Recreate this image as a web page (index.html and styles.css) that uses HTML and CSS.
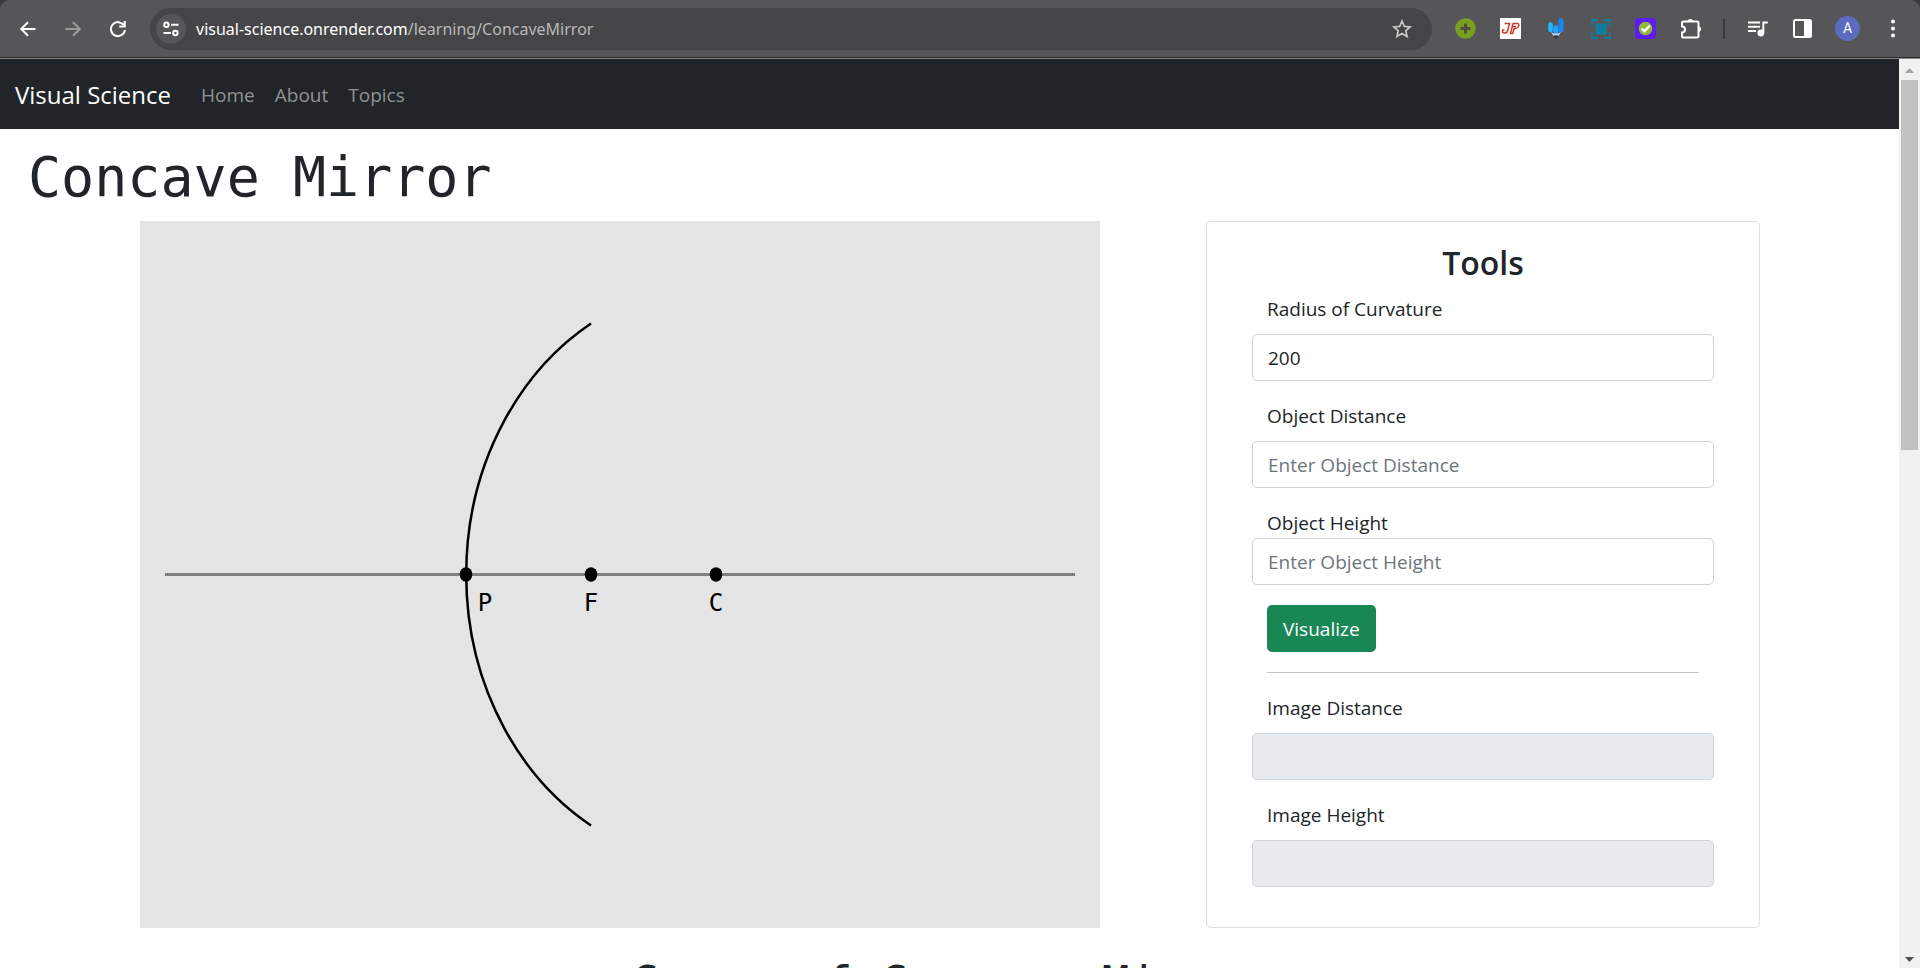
FILE: index.html
```html
<!DOCTYPE html>
<html lang="en">
<head>
<meta charset="utf-8">
<title>Concave Mirror</title>
<link rel="stylesheet" href="styles.css">
</head>
<body>
<header class="toolbar">
  <div class="toolbar-surface">
    <button class="tool" aria-label="Back"><svg width="16" height="16" viewBox="0 0 16 16"><path d="M15.5 8H1.5M8 1.2L1.2 8L8 14.8" class="ln white"/></svg></button>
    <button class="tool" aria-label="Forward"><svg width="16" height="16" viewBox="0 0 16 16"><path d="M.5 8H14.5M8 1.2L14.8 8L8 14.8" class="ln dim"/></svg></button>
    <button class="tool" aria-label="Reload"><svg width="18" height="18" viewBox="0 0 18 18"><path d="M15 5.6A7 7 0 1 0 15.9 10" class="ln white"/><path d="M16.8 1V7.6H10.2V5.6H14.8V1Z" fill="#fff"/></svg></button>
    <div class="omnibox">
      <button class="site-info" aria-label="Site information"><svg width="16" height="16" viewBox="0 0 16 16"><g class="ln white"><circle cx="3.4" cy="3.8" r="2.2"/><path d="M8 3.8H15.5M.5 12H8"/><circle cx="12.4" cy="12" r="2.2"/></g></svg></button>
      <span class="url">visual-science.onrender.com<span class="url-path">/learning/ConcaveMirror</span></span>
      <button class="star" aria-label="Bookmark"><svg width="20" height="20" viewBox="0 0 20 20"><path d="M10 2L12.3 7.4L18.2 7.9L13.7 11.8L15.1 17.5L10 14.5L4.9 17.5L6.3 11.8L1.8 7.9L7.7 7.4Z" fill="none" stroke="#c7c7c7" stroke-width="1.7"/></svg></button>
    </div>
    <div class="extensions">
      <button class="tool" aria-label="Add"><svg width="21" height="21" viewBox="0 0 21 21"><circle cx="10.5" cy="10.5" r="10.3" fill="#789f1d"/><path d="M10.5 5.5V15.5M5.5 10.5H15.5" stroke="#4c5042" stroke-width="3"/></svg></button>
      <button class="tool" aria-label="JF"><svg width="21" height="21" viewBox="0 0 21 21"><path d="M0 0H21V21H0Z" fill="#fff"/><path d="M4.5 5.5H9.5L7.5 13Q7 15 4.500 15Q2 15 2.500 12H4.500M10.500 15.500L13 5.500H18Q19.500 6.500 18.500 8.500Q17.500 10.500 15 10.500H14L12.800 15.500ZM13 8.500H16" fill="none" stroke="#cf3a30" stroke-width="1.5" stroke-linejoin="round"/></svg></button>
      <button class="tool" aria-label="Pencil"><svg width="16" height="21" viewBox="0 0 16 21"><path d="M2.500 6.500V12" stroke="#20b7fa" stroke-width="4.500" stroke-linecap="round"/><path d="M7.800 10V13" stroke="#1ca3f8" stroke-width="5.500" stroke-linecap="round"/><path d="M13 2.500V12" stroke="#1c82f5" stroke-width="5" stroke-linecap="round"/><path d="M3 14Q8 17 13 14L10.500 18H5.500Z" fill="#b5d9f2"/><path d="M5.500 17.500H10.500L8 21Z" fill="#2c2f36"/></svg></button>
      <button class="tool" aria-label="Capture"><svg width="20" height="20" viewBox="0 0 20 20"><path d="M4.500 4.500H15.500V15.500H4.500Z" fill="#127ba3"/><path d="M1 7V1H7M13 1H19V7M19 13V19H13M7 19H1V13" fill="none" stroke="#127ba3" stroke-width="1.800"/></svg></button>
      <button class="tool" aria-label="Check"><svg width="21" height="21" viewBox="0 0 21 21"><rect width="21" height="21" rx="3" fill="#5d1cf0"/><circle cx="10.500" cy="10.500" r="6.800" fill="#92b936"/><path d="M6.800 10.500L9.500 13.300L14.800 7.500" fill="none" stroke="#fff" stroke-width="2.300"/></svg></button>
      <button class="tool" aria-label="Extensions"><svg width="22" height="22" viewBox="0 0 22 22"><path d="M3.500 3.500H17Q18.500 3.500 18.500 5V18Q18.500 19.500 17 19.500H3.500Q2 19.500 2 18V14.500A3 3 0 0 0 2 8.500V5Q2 3.500 3.500 3.500Z" class="ln white"/><path d="M7.800 3.500A2.600 2.600 0 0 1 13 3.500ZM18.500 8.500A2.600 2.600 0 0 1 18.500 13.700Z" fill="#fff"/></svg></button>
    </div>
    <div class="divider"></div>
    <button class="tool" aria-label="Media"><svg width="20" height="16" viewBox="0 0 20 16"><path d="M0 1.500H12M0 5.700H12M0 9.900H8M15.300 12V1.500H19.800" class="ln white"/><circle cx="12.900" cy="12" r="3.400" fill="#fff"/></svg></button>
    <button class="tool" aria-label="Side panel"><svg width="19" height="19" viewBox="0 0 19 19"><rect x="1" y="1" width="17" height="17" rx="1.500" class="ln white"/><path d="M11 1H18V18H11Z" fill="#fff"/></svg></button>
    <button class="tool" aria-label="Profile"><span class="avatar">A</span></button>
    <button class="tool" aria-label="Menu"><svg width="4" height="19" viewBox="0 0 4 19"><g fill="#fff"><circle cx="2" cy="2.500" r="2"/><circle cx="2" cy="9.500" r="2"/><circle cx="2" cy="16.500" r="2"/></g></svg></button>
  </div>
</header>
<div class="viewport">
  <div class="page">
    <nav class="navbar">
      <a class="brand" href="#">Visual Science</a>
      <a class="nav-link" href="#">Home</a>
      <a class="nav-link" href="#">About</a>
      <a class="nav-link" href="#">Topics</a>
    </nav>
    <main>
      <h1 class="title">Concave Mirror</h1>
      <div class="lab">
        <div class="stage">
          <svg class="diagram" viewBox="0 0 960 707" role="img" aria-label="Concave mirror ray diagram">
            <path d="M25 353.500H935" stroke="#808080" stroke-width="3"/>
            <path d="M451 102.500A250 290 0 0 0 451 604.500" fill="none" stroke="#000" stroke-width="2.500"/>
            <ellipse cx="326" cy="353.500" rx="6.300" ry="7.300"/>
            <ellipse cx="451" cy="353.500" rx="6.300" ry="7.300"/>
            <ellipse cx="576" cy="353.500" rx="6.300" ry="7.300"/>
            <text class="point" x="345" y="390">P</text>
            <text class="point" x="451" y="390">F</text>
            <text class="point" x="576" y="390">C</text>
          </svg>
        </div>
        <form class="card">
          <h2 class="card-title">Tools</h2>
          <div class="field"><label for="radius">Radius of Curvature</label><input id="radius" type="text" value="200"></div>
          <div class="field"><label for="distance">Object Distance</label><input id="distance" type="text" placeholder="Enter Object Distance"></div>
          <div class="field tight"><label for="height">Object Height</label><input id="height" type="text" placeholder="Enter Object Height"></div>
          <button class="visualize" type="button">Visualize</button>
          <hr class="rule">
          <div class="field"><label for="image-distance">Image Distance</label><input id="image-distance" type="text" disabled></div>
          <div class="field"><label for="image-height">Image Height</label><input id="image-height" type="text" disabled></div>
        </form>
      </div>
      <h2 class="section-title">Cases of Concave Mirror</h2>
    </main>
  </div>
  <div class="scrollbar">
    <svg class="arrow" width="9" height="5" viewBox="0 0 9 5"><path d="M0 5L4.500 0L9 5Z" fill="#a3a3a3"/></svg>
    <div class="track"><div class="thumb"></div></div>
    <svg class="arrow" width="9" height="5" viewBox="0 0 9 5"><path d="M0 0L4.500 5L9 0Z" fill="#505050"/></svg>
  </div>
</div>
</body>
</html>
```
FILE: styles.css
```css
* { box-sizing: border-box; }
body {
  margin: 0;
  height: 100vh;
  display: flex;
  flex-direction: column;
  overflow: hidden;
  background: #fff;
  color: #212529;
  font-family: "Open Sans", "Noto Sans", sans-serif;
  font-size: 19px;
  line-height: 30px;
}
button, input { font: inherit; color: inherit; }
svg { display: block; }

/* Browser toolbar */
.toolbar { flex: none; background: #3c3c3e; border-bottom: 1px solid #838383; }
.toolbar-surface {
  display: flex;
  align-items: center;
  height: 58px;
  padding: 0 5px;
  background: #565658;
  border-bottom: 1px solid #2c2c2e;
  border-radius: 10px 10px 0 0;
}
.tool {
  flex: none;
  width: 45px;
  height: 42px;
  padding: 0;
  border: 0;
  background: none;
  display: flex;
  align-items: center;
  justify-content: center;
}
.ln { fill: none; stroke-width: 2; }
.white { stroke: #fff; }
.dim { stroke: #9a9a9b; }
.omnibox {
  flex: 1;
  display: flex;
  align-items: center;
  height: 42px;
  margin: 0 11px 0 10px;
  padding: 0 20px 0 6px;
  border-radius: 21px;
  background: #454547;
}
.site-info {
  width: 30px;
  height: 30px;
  padding: 0;
  border: 0;
  border-radius: 50%;
  background: #565658;
  display: flex;
  align-items: center;
  justify-content: center;
}
.url { flex: 1; margin-left: 10px; color: #fff; font-family: "Noto Sans", sans-serif; font-size: 16px; }
.url-path { color: #b8b8b8; }
.star { padding: 0; border: 0; background: none; }
.extensions { display: flex; }
.divider { width: 2px; height: 20px; margin: 0 10px; background: #3a3a3c; }
.avatar {
  width: 25px;
  height: 25px;
  border-radius: 50%;
  background: #5c6bc0;
  color: #fff;
  font: 14px/25px Roboto, sans-serif;
  text-align: center;
}

/* Page */
.viewport { flex: 1; min-height: 0; display: flex; }
.page { flex: 1; min-width: 0; overflow: hidden; }
.navbar {
  display: flex;
  align-items: center;
  height: 70px;
  padding: 2px 15px 0;
  background: #212529;
}
.navbar a { text-decoration: none; }
.brand { margin-right: 20px; color: #fff; font-size: 24px; }
.nav-link { padding: 0 10px; color: #909294; }
.title {
  margin: 0;
  padding: 12px 28px 8px;
  font: 400 55px/72px "DejaVu Sans Mono", monospace;
}
.lab {
  display: grid;
  grid-template-columns: minmax(0, 960fr) minmax(0, 554fr);
  gap: 106px;
  padding: 0 139px 0 140px;
}
.stage { background: #e4e4e4; }
.diagram { width: 100%; height: 100%; }
.point { font: 24px "DejaVu Sans Mono", monospace; text-anchor: middle; }
.card {
  display: flex;
  flex-direction: column;
  gap: 20px;
  padding: 20px 45px 40px;
  border: 1px solid #dfdfdf;
  border-radius: 5px;
}
.card-title {
  margin: 0 0 -10px;
  font-size: 32px;
  font-weight: 600;
  line-height: 42px;
  text-align: center;
}
.field { display: flex; flex-direction: column; gap: 10px; }
.field.tight { gap: 0; }
.field label { padding: 0 15px; }
.field input {
  width: 100%;
  height: 47px;
  padding: 1px 15px 0;
  border: 1px solid #ced4da;
  border-radius: 5px;
  background: #fff;
}
.field input::placeholder { color: #6c757d; opacity: 1; }
.field input:disabled { background: #e9ecef; }
.visualize {
  align-self: flex-start;
  height: 47px;
  margin-left: 15px;
  padding: 1px 16px 0;
  border: 0;
  border-radius: 5px;
  background: #198754;
  color: #fff;
}
.rule { width: auto; height: 1px; margin: 0 15px; border: 0; background: #c4c5c6; }
.section-title {
  margin: 25px 0 0;
  text-align: center;
  font: 500 46px/60px "DejaVu Sans Mono", monospace;
}

/* Scrollbar */
.scrollbar {
  flex: none;
  width: 21px;
  display: flex;
  flex-direction: column;
  align-items: center;
  padding: 9px 0 6px;
  background: #f1f1f1;
}
.track { flex: 1; width: 17px; padding: 7px 0; }
.thumb { height: 42.5%; background: #c1c1c1; }
```
